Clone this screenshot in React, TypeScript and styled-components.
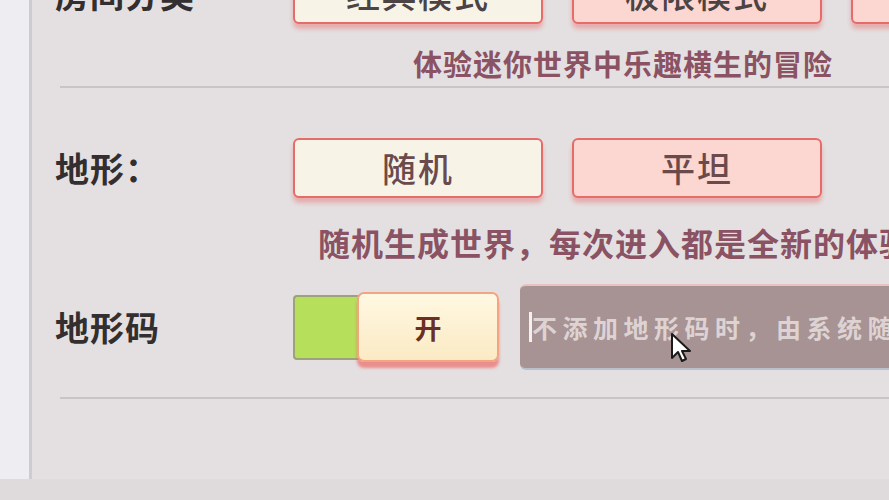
import React from "react";
import styled, { createGlobalStyle } from "styled-components";

const Global = createGlobalStyle`
  html, body { margin: 0; padding: 0; overflow: hidden; }
  body { font-family: "Noto Sans CJK SC", "Noto Sans", sans-serif; background: #dfdbdc; }
`;

const Page = styled.div`
  width: 889px;
  height: 500px;
  display: flex;
  flex-direction: column;
  overflow: hidden;
  background: #dfdbdc;
`;

const Main = styled.div`
  display: flex;
  height: 479px;
  flex-shrink: 0;
`;

const Rail = styled.div`
  width: 29px;
  flex-shrink: 0;
  background: #eeedf1;
  border-right: 3px solid #cdccd0;
`;

const Panel = styled.div`
  flex: 1;
  background: #e4e0e1;
  padding-left: 23px;
  overflow: hidden;
`;

const Content = styled.div`
  margin-top: -36px;
  display: flex;
  flex-direction: column;
`;

const OptionRow = styled.div<{ $h: number }>`
  display: flex;
  align-items: center;
  height: ${(p) => p.$h}px;
  flex-shrink: 0;
`;

const Label = styled.div`
  width: 238px;
  flex-shrink: 0;
  font-size: 34px;
  font-weight: 700;
  color: #332e2f;
  letter-spacing: 1px;
  white-space: nowrap;
  line-height: 1;
`;

const Choices = styled.div`
  display: flex;
  gap: 29px;
`;

const Choice = styled.div<{ $active?: boolean; $dark?: boolean }>`
  width: 250px;
  height: 60px;
  box-sizing: border-box;
  flex-shrink: 0;
  display: flex;
  align-items: center;
  justify-content: center;
  border: 2px solid #e66c6a;
  border-radius: 6px;
  background: ${(p) => (p.$active ? "#f7f3e7" : "#fcd6d0")};
  box-shadow: 0 5px 4px rgba(232, 110, 110, 0.45);
  font-size: 34px;
  font-weight: 500;
  color: ${(p) => (p.$dark ? "#4b4344" : "#6b4a4c")};
  letter-spacing: 2px;
  line-height: 1;
`;

const Desc = styled.div<{ $indent: number; $size: number; $top: number }>`
  margin-left: ${(p) => p.$indent}px;
  margin-top: ${(p) => p.$top}px;
  font-size: ${(p) => p.$size}px;
  line-height: ${(p) => p.$size + 5}px;
  font-weight: 700;
  color: #8a5263;
  white-space: nowrap;
  letter-spacing: 1px;
`;

const Divider = styled.div<{ $top: number }>`
  margin-left: 5px;
  margin-top: ${(p) => p.$top}px;
  height: 2px;
  background: #c9c5c6;
  flex-shrink: 0;
`;

const Spacer = styled.div<{ $h: number }>`
  height: ${(p) => p.$h}px;
  flex-shrink: 0;
`;

const Toggle = styled.div`
  display: flex;
  align-items: center;
  flex-shrink: 0;
`;

const Track = styled.div`
  width: 66px;
  height: 65px;
  box-sizing: border-box;
  background: #b6df5c;
  border: 2px solid #9ea27a;
  border-right: none;
  border-radius: 4px 0 0 4px;
`;

const Knob = styled.div`
  width: 142px;
  height: 70px;
  box-sizing: border-box;
  margin-left: -2px;
  display: flex;
  align-items: center;
  justify-content: center;
  background: linear-gradient(#fff8e2, #fbeac4);
  border: 2px solid #f2a483;
  border-radius: 7px;
  box-shadow: 0 6px 3px rgba(236, 106, 106, 0.7);
  font-size: 27px;
  font-weight: 700;
  color: #6b2f24;
`;

const InputWrap = styled.div`
  position: relative;
  margin-left: 21px;
  flex: 1;
  height: 86px;
  box-sizing: border-box;
  display: flex;
  align-items: center;
  background: #a79294;
  border-top: 2px solid #e8c2c0;
  border-bottom: 2px solid #b8c0d0;
  border-radius: 6px 0 0 6px;
  padding-left: 9px;
`;

const Caret = styled.div`
  width: 3px;
  height: 30px;
  background: #f4f0f0;
  flex-shrink: 0;
`;

const Placeholder = styled.div`
  font-size: 25px;
  font-weight: 700;
  color: #ddd3d3;
  letter-spacing: 5.5px;
  white-space: nowrap;
  line-height: 1;
`;

const Pointer = styled.svg`
  position: absolute;
  left: 150px;
  top: 46px;
`;

export default function App() {
  return (
    <>
      <Global />
      <Page>
        <Main>
          <Rail />
          <Panel>
            <Content>
              <OptionRow $h={60}>
                <Label>房间分类</Label>
                <Choices>
                  <Choice $active $dark>经典模式</Choice>
                  <Choice $dark>极限模式</Choice>
                  <Choice $dark>高级模式</Choice>
                </Choices>
              </OptionRow>
              <Desc $indent={358} $size={29} $top={22}>
                体验迷你世界中乐趣横生的冒险
              </Desc>
              <Divider $top={6} />
              <Spacer $h={50} />
              <OptionRow $h={60}>
                <Label>地形：</Label>
                <Choices>
                  <Choice $active>随机</Choice>
                  <Choice>平坦</Choice>
                </Choices>
              </OptionRow>
              <Desc $indent={263} $size={32} $top={26}>
                随机生成世界，每次进入都是全新的体验
              </Desc>
              <Spacer $h={23} />
              <OptionRow $h={86}>
                <Label>地形码</Label>
                <Toggle>
                  <Track />
                  <Knob>开</Knob>
                </Toggle>
                <InputWrap>
                  <Caret />
                  <Placeholder>不添加地形码时，由系统随机生成</Placeholder>
                  <Pointer width="24" height="32" viewBox="0 0 24 32">
                    <path
                      d="M2 2 L2 26 L8 20 L12 29 L16 27 L12 19 L20 19 Z"
                      fill="#ffffff"
                      stroke="#1a1a1a"
                      strokeWidth="2"
                      strokeLinejoin="round"
                    />
                  </Pointer>
                </InputWrap>
              </OptionRow>
              <Divider $top={27} />
            </Content>
          </Panel>
        </Main>
      </Page>
    </>
  );
}
